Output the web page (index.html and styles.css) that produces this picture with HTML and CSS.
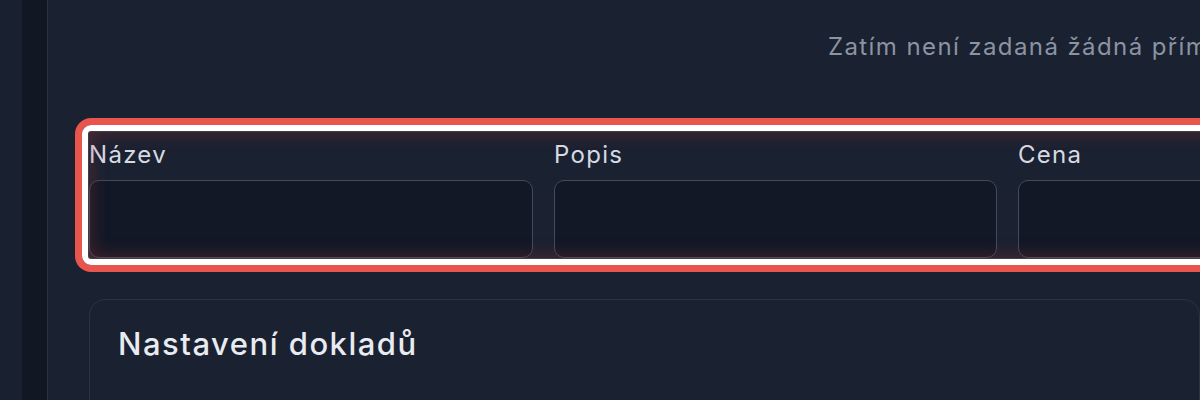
FILE: index.html
```html
<!DOCTYPE html>
<html lang="cs">
<head>
<meta charset="utf-8">
<title>Nastavení</title>
<link rel="stylesheet" href="styles.css">
</head>
<body>
<div class="app">
  <aside class="rail">
    <div class="rail-outer"></div>
    <div class="rail-inner"></div>
  </aside>
  <main class="main">
    <p class="empty">Zatím není zadaná žádná přímá platba.</p>
    <div class="fields">
      <label class="field">
        <span class="field-label">Název</span>
        <span class="field-input"></span>
      </label>
      <label class="field">
        <span class="field-label">Popis</span>
        <span class="field-input"></span>
      </label>
      <label class="field">
        <span class="field-label">Cena</span>
        <span class="field-input"></span>
      </label>
    </div>
    <section class="card">
      <h2 class="card-title">Nastavení dokladů</h2>
    </section>
  </main>
</div>
</body>
</html>
```
FILE: styles.css
```css
* { box-sizing: border-box; }
html, body {
  margin: 0;
  height: 100%;
  background: #1a2131;
  font-family: "Inter", "Noto Sans", sans-serif;
  overflow: hidden;
}
.app {
  display: flex;
  height: 400px;
  width: 1200px;
}
.rail {
  display: flex;
  flex: 0 0 48px;
  border-right: 1px solid #2a3344;
}
.rail-outer { width: 22px; background: #192030; }
.rail-inner { flex: 1; background: #111723; }
.main {
  flex: 1;
  min-width: 0;
  padding-left: 41px;
  background: #1a2131;
  overflow: hidden;
}
.empty {
  margin: 31px 0 0 739px;
  font-size: 24px;
  line-height: 32px;
  letter-spacing: 1.4px;
  color: #8c93a1;
  white-space: nowrap;
}
.fields {
  position: relative;
  display: grid;
  grid-template-columns: 444px 443px 443px;
  column-gap: 21px;
  margin-top: 76px;
}
.fields::after {
  content: "";
  position: absolute;
  left: -7px;
  top: -14px;
  bottom: -7px;
  right: -60px;
  border: 6px solid #ffffff;
  border-radius: 9px;
  box-shadow: 0 0 0 7px #e8554c, inset 0 0 0 1px #3d3f48, inset 0 0 20px rgba(190, 60, 60, 0.4);
  pointer-events: none;
}
.field {
  display: flex;
  flex-direction: column;
}
.field-label {
  font-size: 24px;
  line-height: 32px;
  letter-spacing: 1.3px;
  color: #d6dae2;
  margin-bottom: 9px;
}
.field-input {
  display: block;
  height: 78px;
  border: 1.5px solid #434a58;
  border-radius: 10px;
  background: #121826;
}
.card {
  margin-top: 41px;
  height: 200px;
  border: 1px solid #2b3344;
  border-radius: 16px;
  padding: 24px 28px;
  background: #1a2131;
}
.card-title {
  margin: 0;
  font-size: 31px;
  line-height: 40px;
  font-weight: 500;
  letter-spacing: 1.5px;
  color: #e8ebf0;
}
```
